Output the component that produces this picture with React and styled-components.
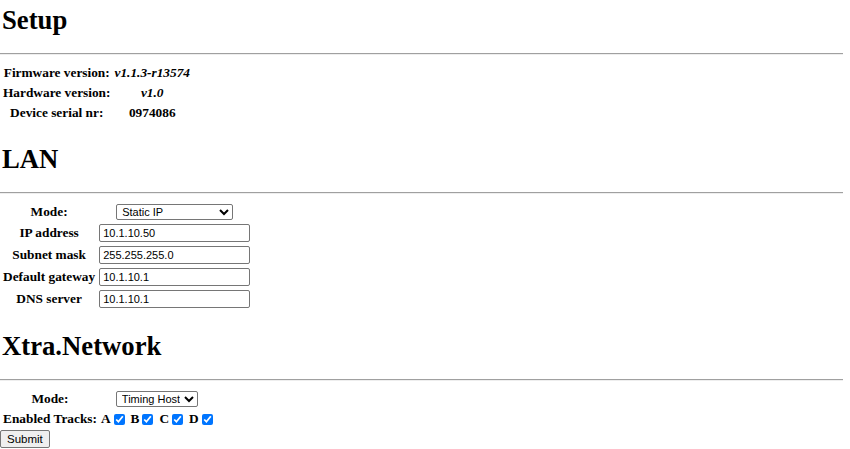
import React, { useState } from 'react';
import styled, { createGlobalStyle } from 'styled-components';

const GlobalStyle = createGlobalStyle`
  html, body {
    margin: 0;
    padding: 0;
    background: #fff;
  }
  body {
    font-family: "Liberation Serif", "Times New Roman", serif;
    font-size: 13.33px;
    color: #000;
  }
`;

const Page = styled.form`
  padding-top: 5px;
  width: 843px;
`;

const Title = styled.h1`
  margin: ${props => props.$top || 0}px 0 0 2px;
  font-size: 26.7px;
  line-height: 30px;
  font-weight: bold;
`;

const Rule = styled.hr`
  margin: 18px 0 7px 0;
  border: none;
  border-top: 1px solid #a0a0a0;
  border-bottom: 1px solid #eeeeee;
  height: 0;
`;

const Table = styled.table`
  border-spacing: 2px;
  border-collapse: separate;
`;

const Label = styled.th`
  padding: 1px;
  font-size: 13.33px;
  line-height: 16px;
  font-weight: bold;
  text-align: center;
  white-space: nowrap;
`;

const Value = styled.th`
  padding: 1px;
  font-size: 13.33px;
  line-height: 16px;
  font-weight: bold;
  font-style: ${props => (props.$italic ? 'italic' : 'normal')};
  text-align: ${props => props.$align || 'center'};
  white-space: nowrap;
`;

const TextInput = styled.input`
  box-sizing: border-box;
  width: 151px;
  height: 18px;
  margin: 0;
  padding: 1px 3px;
  border: 1px solid #767676;
  border-radius: 2px;
  font-family: "Liberation Sans", Arial, sans-serif;
  font-size: 11px;
  color: #000;
`;

const Select = styled.select`
  box-sizing: border-box;
  width: ${props => props.$width}px;
  height: 16px;
  margin: 0;
  padding: 0 1px;
  border: 1px solid #767676;
  border-radius: 2px;
  font-family: "Liberation Sans", Arial, sans-serif;
  font-size: 11px;
  color: #000;
  background: #fff;
`;

const Tracks = styled.span`
  display: inline-flex;
  align-items: center;
  gap: 6px;
`;

const Track = styled.label`
  display: inline-flex;
  align-items: center;
  gap: 3px;
  font-weight: bold;
`;

const Check = styled.input`
  width: 11px;
  height: 11px;
  margin: 0;
  accent-color: #0075ff;
`;

const SubmitButton = styled.button`
  display: block;
  margin: 0;
  padding: 1px 6px;
  height: 18px;
  border: 1px solid #767676;
  border-radius: 2px;
  background: #efefef;
  font-family: "Liberation Sans", Arial, sans-serif;
  font-size: 11.5px;
  color: #000;
`;

const lanFields = [
  { name: 'ip', label: 'IP address' },
  { name: 'mask', label: 'Subnet mask' },
  { name: 'gateway', label: 'Default gateway' },
  { name: 'dns', label: 'DNS server' },
];

const App = () => {
  const [formData, setFormData] = useState({
    lanMode: 'static',
    ip: '10.1.10.50',
    mask: '255.255.255.0',
    gateway: '10.1.10.1',
    dns: '10.1.10.1',
    xtraMode: 'host',
  });
  const [tracks, setTracks] = useState({ A: true, B: true, C: true, D: true });

  const handleChange = (e) => {
    const { name, value } = e.target;
    setFormData({ ...formData, [name]: value });
  };

  const toggleTrack = (t) => setTracks({ ...tracks, [t]: !tracks[t] });

  return (
    <>
      <GlobalStyle />
      <Page onSubmit={e => e.preventDefault()}>
        <Title>Setup</Title>
        <Rule />
        <Table>
          <tbody>
            <tr>
              <Label>Firmware version:</Label>
              <Value $italic>v1.1.3-r13574</Value>
            </tr>
            <tr>
              <Label>Hardware version:</Label>
              <Value $italic>v1.0</Value>
            </tr>
            <tr>
              <Label>Device serial nr:</Label>
              <Value>0974086</Value>
            </tr>
          </tbody>
        </Table>

        <Title $top={20}>LAN</Title>
        <Rule />
        <Table>
          <tbody>
            <tr>
              <Label>Mode:</Label>
              <Value>
                <Select $width={117} name="lanMode" value={formData.lanMode} onChange={handleChange}>
                  <option value="static">Static IP</option>
                  <option value="dhcp">DHCP</option>
                </Select>
              </Value>
            </tr>
            {lanFields.map(field => (
              <tr key={field.name}>
                <Label>{field.label}</Label>
                <Value>
                  <TextInput type="text" name={field.name} value={formData[field.name]} onChange={handleChange} />
                </Value>
              </tr>
            ))}
          </tbody>
        </Table>

        <Title $top={20}>Xtra.Network</Title>
        <Rule />
        <Table>
          <tbody>
            <tr>
              <Label>Mode:</Label>
              <Value>
                <Select $width={82} name="xtraMode" value={formData.xtraMode} onChange={handleChange}>
                  <option value="host">Timing Host</option>
                  <option value="client">Client</option>
                </Select>
              </Value>
            </tr>
            <tr>
              <Label>Enabled Tracks:</Label>
              <Value $align="left">
                <Tracks>
                  {Object.keys(tracks).map(t => (
                    <Track key={t}>
                      {t}
                      <Check type="checkbox" checked={tracks[t]} onChange={() => toggleTrack(t)} />
                    </Track>
                  ))}
                </Tracks>
              </Value>
            </tr>
          </tbody>
        </Table>
        <SubmitButton type="submit">Submit</SubmitButton>
      </Page>
    </>
  );
};

export default App;
